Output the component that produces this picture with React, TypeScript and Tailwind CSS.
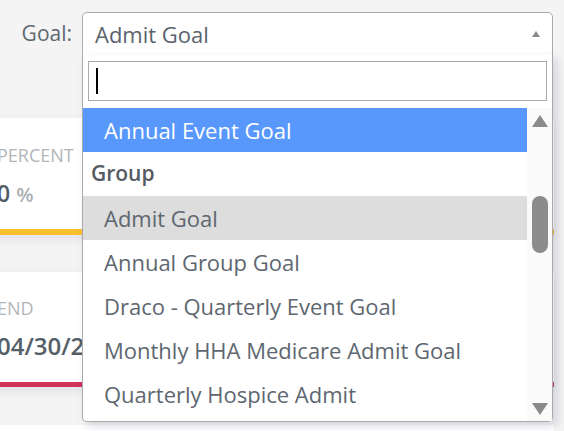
import React from "react";

const options = [
  "Admit Goal",
  "Annual Group Goal",
  "Draco - Quarterly Event Goal",
  "Monthly HHA Medicare Admit Goal",
  "Quarterly Hospice Admit",
];

function Triangle({ up, className }: { up?: boolean; className: string }) {
  return (
    <svg viewBox="0 0 16 12" className={className}>
      <path d={up ? "M8 0 L16 12 L0 12 Z" : "M0 0 L16 0 L8 12 Z"} fill="#8a8a8a" />
    </svg>
  );
}

export default function App() {
  return (
    <div
      className="relative h-[431px] w-[564px] overflow-hidden bg-[#f4f4f4]"
      style={{ fontFamily: '"Open Sans", "Noto Sans", sans-serif' }}
    >
      {/* goal picker */}
      <div className="flex h-[118px] items-start pt-[12px]">
        <label className="w-[72px] pt-[7px] text-right text-[21px] leading-[28px] text-[#5f6871]">Goal:</label>
        <div className="relative z-10 ml-[10px] w-[471px]">
          <div className="flex h-[44px] items-center rounded-t-[5px] border border-[#aaaaaa] bg-white pl-[12px] pr-[10px]">
            <span className="flex-1 text-[22px] text-[#5a636c]">Admit Goal</span>
            <Triangle up className="h-[6px] w-[12px]" />
          </div>
          <div className="absolute left-0 top-[43px] w-[471px] rounded-b-[5px] border border-t-0 border-[#aaaaaa] bg-white shadow-[4px_4px_10px_rgba(60,70,110,0.18)]">
            <div className="px-[5px] pb-[7px] pt-[6px]">
              <div className="flex h-[40px] items-center border border-[#aaaaaa] pl-[7px]">
                <span className="h-[26px] w-[2px] bg-black" />
              </div>
            </div>
            <div className="flex h-[313px]">
              <div className="flex-1">
                <div className="flex h-[44px] items-center bg-[#5897fb] pl-[21px] text-[22px] text-white">Annual Event Goal</div>
                <div className="flex h-[44px] items-center pl-[8px] text-[21px] font-semibold text-[#555b62]">Group</div>
                {options.map((o, i) => (
                  <div
                    key={o}
                    className={`flex h-[44px] items-center pl-[21px] text-[22px] text-[#5e6770] ${i === 0 ? "bg-[#dddddd]" : ""}`}
                  >
                    {o}
                  </div>
                ))}
              </div>
              <div className="flex w-[25px] flex-col items-center bg-[#fafafa] pl-[4px] pr-[4px] pt-[7px]">
                <Triangle up className="h-[12px] w-[16px]" />
                <div className="mt-[69px] h-[57px] w-[16px] rounded-full bg-[#8c8c8c]" />
                <div className="flex-1" />
                <Triangle className="mb-[6px] h-[12px] w-[16px]" />
              </div>
            </div>
          </div>
        </div>
      </div>

      {/* cards behind */}
      <div className="ml-[-20px] w-[574px]">
        <div className="flex h-[117px] flex-col bg-white shadow-[0_4px_10px_rgba(90,100,140,0.12)]">
          <div className="flex-1 pl-[17px] pt-[25px]">
            <div className="text-[18px] leading-[24px] text-[#b1b5b9]">PERCENT</div>
            <div className="mt-[9px] flex items-baseline gap-[6px]">
              <span className="text-[23px] font-semibold text-[#525c66]">0</span>
              <span className="text-[20px] font-semibold text-[#a9aeb3]">%</span>
            </div>
          </div>
          <div className="h-[6px] bg-[#fbc02d]" />
        </div>
        <div className="mt-[37px] flex h-[115px] flex-col bg-white shadow-[0_4px_10px_rgba(90,100,140,0.12)]">
          <div className="flex-1 pl-[17px] pt-[24px]">
            <div className="text-[18px] leading-[24px] text-[#b1b5b9]">END</div>
            <div className="mt-[8px] text-[24px] font-semibold text-[#545e68]">04/30/2020</div>
          </div>
          <div className="h-[5px] bg-[#d2335c]" />
        </div>
        <div className="mt-[38px] h-[60px] bg-white" />
      </div>
    </div>
  );
}
